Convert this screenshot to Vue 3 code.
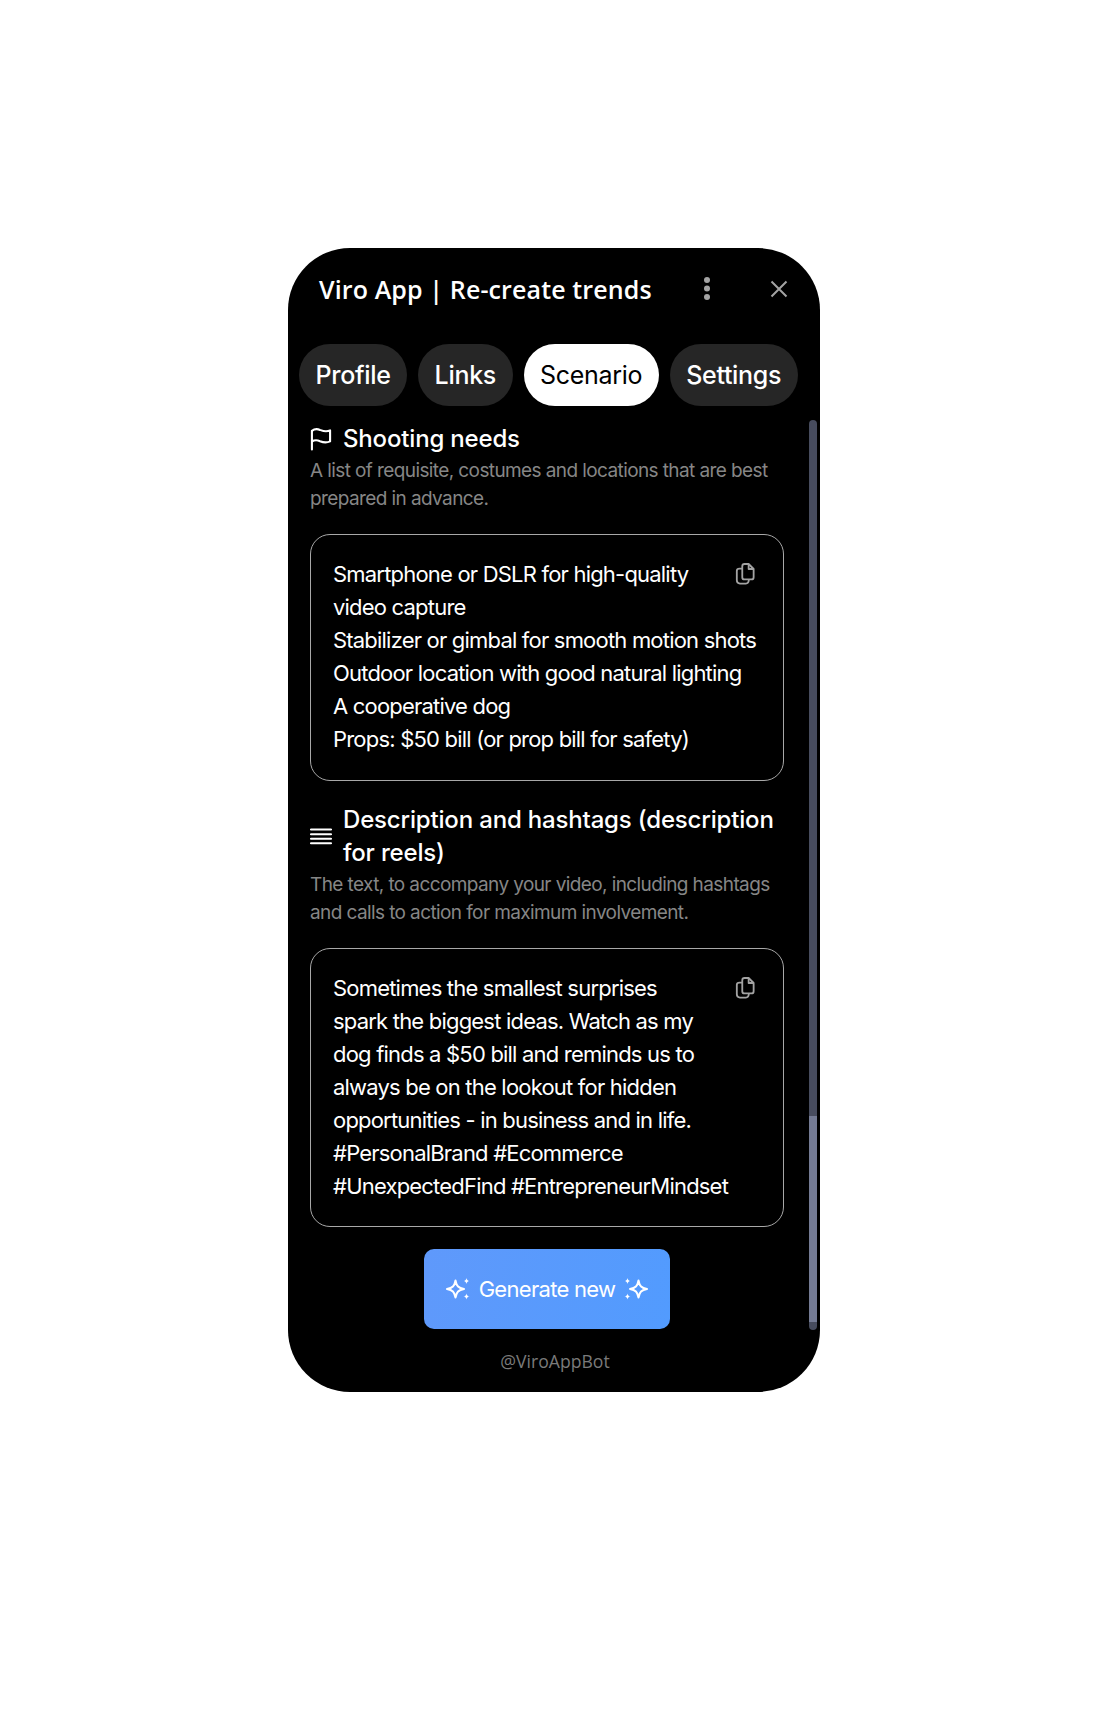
<template>
  <div class="page">
    <div class="phone">
      <header class="top">
        <h1 class="title">Viro App | Re-create trends</h1>
        <svg class="dots" viewBox="0 0 8 26" aria-hidden="true">
          <circle cx="4" cy="4" r="3" />
          <circle cx="4" cy="12.500" r="3" />
          <circle cx="4" cy="21" r="3" />
        </svg>
        <svg class="close" viewBox="0 0 18 18" aria-hidden="true">
          <path d="M1.500 1.500l15 15M16.500 1.500l-15 15" />
        </svg>
      </header>

      <nav class="tabs">
        <button
          v-for="tab in tabs"
          :key="tab"
          type="button"
          class="tab"
          :class="{ active: tab === activeTab }"
        >
          {{ tab }}
        </button>
      </nav>

      <main class="body">
        <section v-for="sec in sections" :key="sec.title" class="section">
          <div class="heading">
            <svg v-if="sec.icon === 'flag'" class="head-icon" viewBox="0 0 23 24" aria-hidden="true">
              <path d="M2 23V3.500c2.500-2 5.500-2.300 8.500-1 3 1.200 6 2.700 10.500.5v11.500c-4.500 2-7.500 1-10.500-.2-3-1.300-6-1.300-8.500.4" />
            </svg>
            <svg v-else class="head-icon" viewBox="0 0 24 24" aria-hidden="true">
              <path d="M1 5h22M1 10h22M1 15h22M1 20h22" />
            </svg>
            <h2>{{ sec.title }}</h2>
          </div>
          <p class="desc">{{ sec.desc }}</p>
          <div class="card">
            <svg class="copy" viewBox="0 0 22 24" aria-hidden="true">
              <path d="M8 3.500c0-1.500 1-2.500 2.500-2.500h4.500l5.500 5.500v9c0 1.500-1 2.500-2.500 2.500h-7.500c-1.500 0-2.500-1-2.500-2.500z" />
              <path d="M15 1v5.500h5.500" />
              <path d="M8 6H5C3 6 2 7 2 8.500v10.500c0 2 1 3.500 3.500 3.500H12c2 0 3-1 3.300-4.500" />
            </svg>
            <div v-for="line in sec.lines" :key="line" class="line">{{ line }}</div>
          </div>
        </section>

        <div class="actions">
          <button type="button" class="generate">
            <svg class="spark" viewBox="0 0 24 24" aria-hidden="true">
              <path class="outline" d="M9.500 3.500c1 5.500 3 7.500 8.500 8.500-5.500 1-7.500 3-8.500 8.500-1-5.500-3-7.500-8.500-8.500 5.500-1 7.500-3 8.500-8.500z" />
              <path class="solid" d="M20.500 1c.4 2 1 2.600 3 3-2 .4-2.600 1-3 3-.4-2-1-2.600-3-3 2-.4 2.600-1 3-3zM20.500 16.500c.4 2 1 2.600 3 3-2 .4-2.600 1-3 3-.4-2-1-2.600-3-3 2-.4 2.600-1 3-3z" />
            </svg>
            <span>Generate new</span>
            <svg class="spark" viewBox="0 0 24 24" aria-hidden="true">
              <path class="outline" d="M14.500 3.500c1 5.500 3 7.500 8.500 8.500-5.500 1-7.500 3-8.500 8.500-1-5.500-3-7.500-8.500-8.500 5.500-1 7.500-3 8.500-8.500z" />
              <path class="solid" d="M3.500 1c.4 2 1 2.600 3 3-2 .4-2.600 1-3 3-.4-2-1-2.600-3-3 2-.4 2.600-1 3-3zM3.500 16.500c.4 2 1 2.600 3 3-2 .4-2.600 1-3 3-.4-2-1-2.600-3-3 2-.4 2.600-1 3-3z" />
            </svg>
          </button>
        </div>
      </main>

      <footer class="foot">@ViroAppBot</footer>

      <div class="scroll-track"><div class="scroll-thumb"></div></div>
    </div>
  </div>
</template>

<script setup>
const tabs = ['Profile', 'Links', 'Scenario', 'Settings']
const activeTab = 'Scenario'

const sections = [
  {
    icon: 'flag',
    title: 'Shooting needs',
    desc: 'A list of requisite, costumes and locations that are best prepared in advance.',
    lines: [
      'Smartphone or DSLR for high-quality video capture',
      'Stabilizer or gimbal for smooth motion shots',
      'Outdoor location with good natural lighting',
      'A cooperative dog',
      'Props: $50 bill (or prop bill for safety)'
    ]
  },
  {
    icon: 'list',
    title: 'Description and hashtags (description for reels)',
    desc: 'The text, to accompany your video, including hashtags and calls to action for maximum involvement.',
    lines: [
      'Sometimes the smallest surprises',
      'spark the biggest ideas. Watch as my',
      'dog finds a $50 bill and reminds us to',
      'always be on the lookout for hidden',
      'opportunities - in business and in life.',
      '#PersonalBrand #Ecommerce',
      '#UnexpectedFind #EntrepreneurMindset'
    ]
  }
]
</script>

<style>
html,
body {
  background: #fff;
}
</style>

<style scoped>
.page {
  width: 1112px;
  height: 1720px;
  padding: 248px 0 0 288px;
  box-sizing: border-box;
  background: #fff;
  font-family: Inter, "Liberation Sans", sans-serif;
}

.phone {
  position: relative;
  width: 532px;
  height: 1144px;
  border-radius: 62px;
  background: #000;
  color: #fff;
  overflow: hidden;
}

.top {
  display: flex;
  align-items: center;
  height: 82px;
  padding: 0 32px 2px 31px;
}

.title {
  flex: 1;
  margin: 0;
  font-family: "Open Sans", sans-serif;
  font-size: 25px;
  font-weight: 600;
  letter-spacing: 0.12px;
  color: #fff;
}

.dots {
  width: 8px;
  height: 26px;
  margin-right: 59px;
  fill: #a3a3a3;
}

.close {
  width: 18px;
  height: 18px;
  fill: none;
  stroke: #a3a3a3;
  stroke-width: 2;
}

.tabs {
  display: flex;
  gap: 11px;
  margin: 12px 0 0 11px;
}

.tab {
  height: 62px;
  padding: 0 16.500px;
  border: none;
  border-radius: 31px;
  background: #262626;
  color: #fff;
  font-family: Inter, sans-serif;
  font-size: 25px;
  font-weight: 500;
  letter-spacing: -0.3px;
}

.tab.active {
  background: #fff;
  color: #000;
  font-weight: 400;
}

.body {
  width: 474px;
  margin: 16px 0 0 22px;
}

.section {
  margin-bottom: 22px;
}

.heading {
  display: flex;
  align-items: center;
  gap: 11px;
}

.heading h2 {
  margin: 0;
  font-family: Inter, sans-serif;
  font-size: 24px;
  line-height: 33px;
  font-weight: 500;
  letter-spacing: -0.17px;
  color: #fff;
}

.head-icon {
  flex: none;
  width: 22px;
  height: 24px;
  fill: none;
  stroke: #fff;
  stroke-width: 2.200;
  stroke-linejoin: round;
  stroke-linecap: round;
}

.desc {
  margin: 2px 0 0;
  font-size: 19px;
  line-height: 28px;
  letter-spacing: -0.6px;
  color: #868686;
}

.card {
  margin-top: 21px;
  padding: 23px 22px;
  border: 1px solid #a8a8a8;
  border-radius: 20px;
}

.line {
  font-size: 22px;
  line-height: 33.100px;
  letter-spacing: -0.8px;
  color: #fff;
}

.copy {
  float: right;
  width: 20px;
  height: 22px;
  margin: 5px 6px 0 30px;
  fill: none;
  stroke: #a3a3a3;
  stroke-width: 2;
  stroke-linejoin: round;
}

.actions {
  display: flex;
  justify-content: center;
}

.generate {
  display: flex;
  align-items: center;
  justify-content: center;
  gap: 9px;
  width: 246px;
  height: 80px;
  border: none;
  border-radius: 10px;
  background: linear-gradient(100deg, #5f99fb, #529bfe);
  color: #fff;
  font-family: Inter, sans-serif;
  font-size: 22px;
  letter-spacing: -0.7px;
}

.spark {
  width: 24px;
  height: 24px;
}

.spark .outline {
  fill: none;
  stroke: #fff;
  stroke-width: 2;
  stroke-linejoin: round;
}

.spark .solid {
  fill: #fff;
}

.foot {
  margin-top: 20px;
  text-align: center;
  padding-left: 2px;
  font-family: "Open Sans", sans-serif;
  font-size: 17.600px;
  line-height: 24px;
  color: #7a7a7a;
}

.scroll-track {
  position: absolute;
  left: 521px;
  top: 172px;
  width: 8px;
  height: 910px;
  border-radius: 4px;
  background: #474c5e;
  overflow: hidden;
}

.scroll-thumb {
  position: absolute;
  left: 0;
  bottom: 8px;
  width: 100%;
  height: 206px;
  background: #747b94;
}
</style>
